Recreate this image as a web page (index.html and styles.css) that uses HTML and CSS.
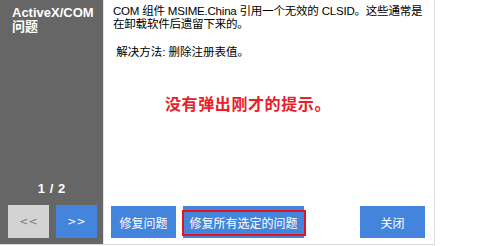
FILE: index.html
```html
<!DOCTYPE html>
<html lang="zh-CN">
<head>
<meta charset="utf-8">
<title>ActiveX/COM 问题</title>
<link rel="stylesheet" href="styles.css">
</head>
<body>
<div class="dialog">
  <aside class="sidebar">
    <div class="title">ActiveX/COM<br>问题</div>
    <div class="spacer"></div>
    <div class="pager">1 / 2</div>
    <div class="nav">
      <button class="nav-btn prev">&lt;&lt;</button>
      <button class="nav-btn next">&gt;&gt;</button>
    </div>
  </aside>
  <main class="content">
    <p class="desc">COM 组件 MSIME.China 引用一个无效的 CLSID。这些通常是<br>在卸载软件后遗留下来的。</p>
    <p class="fix">&nbsp;解决方法: 删除注册表值。</p>
    <p class="notice">没有弹出刚才的提示。</p>
    <div class="spacer"></div>
    <div class="actions">
      <button class="btn btn-one">修复问题</button>
      <button class="btn btn-all">修复所有选定的问题<span class="highlight"></span></button>
      <button class="btn btn-close">关闭</button>
    </div>
  </main>
</div>
</body>
</html>
```

FILE: styles.css
```css
html, body {
  margin: 0;
  padding: 0;
  background: #ffffff;
}

body {
  font-family: "Liberation Sans", "Noto Sans CJK SC", sans-serif;
  font-size: 12px;
  color: #000;
}

.dialog {
  display: flex;
  width: 434px;
  height: 244px;
  border-right: 1px solid #dcdcdc;
  border-bottom: 1px solid #dcdcdc;
}

.sidebar {
  width: 104px;
  flex: none;
  background: #666666;
  border-right: 1px solid #e2e2e2;
  display: flex;
  flex-direction: column;
  box-sizing: border-box;
  padding: 6px 0 6px 8px;
}

.title {
  color: #ffffff;
  font-weight: bold;
  font-size: 13px;
  line-height: 14px;
  padding-left: 4px;
  white-space: nowrap;
}

.spacer {
  flex: 1;
}

.pager {
  color: #ffffff;
  font-weight: bold;
  font-size: 13px;
  line-height: 14px;
  text-align: center;
  padding-right: 8px;
  margin-bottom: 9px;
  word-spacing: 1px;
}

.nav {
  display: flex;
  gap: 7px;
}

.nav-btn {
  width: 41px;
  height: 33px;
  border: none;
  padding: 0;
  margin: 0;
  font-family: "DejaVu Sans", sans-serif;
  font-size: 11px;
}

.prev {
  background: #d3d3d3;
  color: #7a7a7a;
}

.next {
  background: #4384dc;
  color: #ffffff;
}

.content {
  flex: 1;
  min-width: 0;
  display: flex;
  flex-direction: column;
  padding: 5px 9px 6px 7px;
}

.desc {
  margin: 0;
  padding-left: 2px;
  font-size: 11.5px;
  line-height: 13px;
  letter-spacing: -0.2px;
  white-space: nowrap;
}

.fix {
  margin: 15px 0 0 0;
  padding-left: 2px;
  font-size: 11.5px;
  line-height: 13px;
}

.notice {
  margin: 37px 0 0 0;
  padding-left: 54px;
  color: #e8202a;
  font-weight: bold;
  font-size: 16px;
  line-height: 18px;
  letter-spacing: 0.6px;
}

.actions {
  display: flex;
  gap: 7px;
}

.btn {
  position: relative;
  height: 32px;
  border: none;
  margin: 0;
  padding: 0;
  background: #4384dc;
  color: #ffffff;
  font-family: "Noto Sans CJK SC", sans-serif;
  font-size: 12px;
  white-space: nowrap;
}

.btn-one {
  width: 65px;
}

.btn-all {
  width: 121px;
}

.btn-close {
  width: 65px;
  margin-left: auto;
}

.highlight {
  position: absolute;
  left: -1px;
  top: 4px;
  width: 124px;
  height: 26px;
  box-sizing: border-box;
  border: 2px solid #e8141c;
}
```
